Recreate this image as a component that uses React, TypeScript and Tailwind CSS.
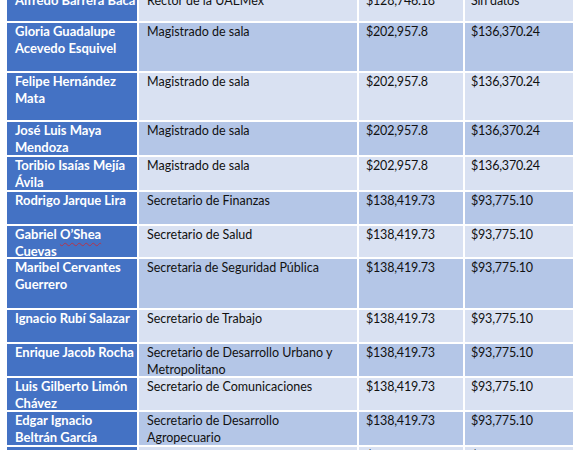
import React from "react";

type Row = { name: React.ReactNode[]; cargo: string[]; a: string; b: string; h: string };

const rows: Row[] = [
  { name: ["Alfredo Barrera Baca"], cargo: ["Rector de la UAEMex"], a: "$128,746.18", b: "Sin datos", h: "h-[29px]" },
  { name: ["Gloria Guadalupe", "Acevedo Esquivel"], cargo: ["Magistrado de sala"], a: "$202,957.8", b: "$136,370.24", h: "h-[48px]" },
  { name: ["Felipe Hernández", "Mata"], cargo: ["Magistrado de sala"], a: "$202,957.8", b: "$136,370.24", h: "h-[47px]" },
  { name: ["José Luis Maya", "Mendoza"], cargo: ["Magistrado de sala"], a: "$202,957.8", b: "$136,370.24", h: "h-[33px]" },
  { name: ["Toribio Isaías Mejía", "Ávila"], cargo: ["Magistrado de sala"], a: "$202,957.8", b: "$136,370.24", h: "h-[33px]" },
  { name: ["Rodrigo Jarque Lira"], cargo: ["Secretario de Finanzas"], a: "$138,419.73", b: "$93,775.10", h: "h-[32px]" },
  {
    name: [
      <>
        Gabriel{" "}
        <span className="underline decoration-wavy decoration-[#b5344a] decoration-1 underline-offset-[3px]">O’Shea</span>
      </>,
      "Cuevas",
    ],
    cargo: ["Secretario de Salud"],
    a: "$138,419.73",
    b: "$93,775.10",
    h: "h-[31px]",
  },
  { name: ["Maribel Cervantes", "Guerrero"], cargo: ["Secretaria de Seguridad Pública"], a: "$138,419.73", b: "$93,775.10", h: "h-[49px]" },
  { name: ["Ignacio Rubí Salazar"], cargo: ["Secretario de Trabajo"], a: "$138,419.73", b: "$93,775.10", h: "h-[32px]" },
  { name: ["Enrique Jacob Rocha"], cargo: ["Secretario de Desarrollo Urbano y", "Metropolitano"], a: "$138,419.73", b: "$93,775.10", h: "h-[32px]" },
  { name: ["Luis Gilberto Limón", "Chávez"], cargo: ["Secretario de Comunicaciones"], a: "$138,419.73", b: "$93,775.10", h: "h-[32px]" },
  { name: ["Edgar Ignacio", "Beltrán García"], cargo: ["Secretario de Desarrollo", "Agropecuario"], a: "$138,419.73", b: "$93,775.10", h: "h-[33px]" },
  { name: ["Alejandro Fernández"], cargo: ["Secretario"], a: "$138,419.73", b: "$93,775.10", h: "h-[33px]" },
];

function Lines({ items }: { items: React.ReactNode[] }) {
  return (
    <>
      {items.map((t, i) => (
        <span key={i} className="block whitespace-nowrap">
          {t}
        </span>
      ))}
    </>
  );
}

export default function App() {
  return (
    <div className="w-[579px] h-[450px] overflow-hidden bg-white font-['Lato','Noto_Sans',sans-serif]">
      <div className="ml-[7px] mt-[-8px] w-[566px] grid grid-cols-[130px_218px_104px_108px] gap-[2px] leading-[17px] text-[#111111]">
        {rows.map((r, i) => {
          const band = i % 2 === 1 ? "bg-[#b4c6e7]" : "bg-[#d9e1f2]";
          return (
            <React.Fragment key={i}>
              <div className={`${r.h} bg-[#4472c4] text-white font-bold text-[13px] pl-[8px] overflow-hidden`}>
                <Lines items={r.name} />
              </div>
              <div className={`${r.h} ${band} text-[12.5px] pl-[8px] overflow-hidden`}>
                <Lines items={r.cargo} />
              </div>
              <div className={`${r.h} ${band} text-[12.5px] tracking-[-0.2px] pl-[7px]`}>{r.a}</div>
              <div className={`${r.h} ${band} text-[12.5px] tracking-[-0.2px] pl-[6px]`}>{r.b}</div>
            </React.Fragment>
          );
        })}
      </div>
    </div>
  );
}
